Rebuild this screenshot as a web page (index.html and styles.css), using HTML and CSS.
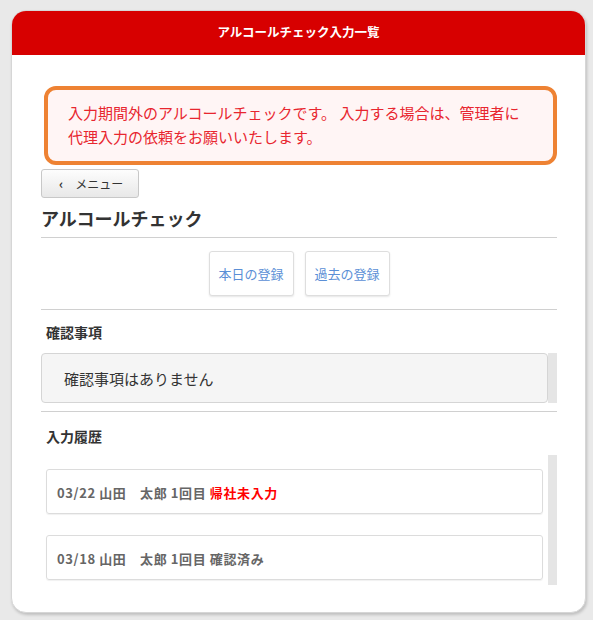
FILE: index.html
```html
<!DOCTYPE html>
<html lang="ja">

<head>
    <meta charset="utf-8">
    <meta name="viewport" content="width=device-width, initial-scale=1.0">
    <title>アルコールチェック入力一覧</title>
    <link rel="stylesheet" href="styles.css">
</head>

<body>
    <div class="kort">
        <header class="topbar">アルコールチェック入力一覧</header>

        <main class="indhold">
            <div class="advarsel">
                入力期間外のアルコールチェックです。 入力する場合は、管理者に<br>代理入力の依頼をお願いいたします。
            </div>

            <button class="menu-knap"><span class="pil">‹</span>メニュー</button>

            <h1>アルコールチェック</h1>

            <nav class="valg">
                <button class="valg-knap">本日の登録</button>
                <button class="valg-knap">過去の登録</button>
            </nav>

            <section class="bekraeft">
                <h2>確認事項</h2>
                <div class="med-spor">
                    <div class="tom-boks">確認事項はありません</div>
                    <div class="spor"></div>
                </div>
            </section>

            <section>
                <h2 class="historik-titel">入力履歴</h2>
                <div class="med-spor historik">
                    <ul class="liste">
                        <li class="post">03/22 山田　太郎 1回目 <span class="mangler">帰社未入力</span></li>
                        <li class="post">03/18 山田　太郎 1回目 確認済み</li>
                    </ul>
                    <div class="spor"></div>
                </div>
            </section>
        </main>
    </div>
</body>

</html>
```

FILE: styles.css
```css
* {
    margin: 0;
    padding: 0;
    box-sizing: border-box;
}

html {
    background-color: #e9e9e9;
}

body {
    padding: 10px 7px 7px 11px;
    font-family: "Noto Sans CJK JP", "Noto Sans", sans-serif;
    color: #333;
}

.kort {
    height: 603px;
    background-color: #fff;
    border: 1px solid #d6d6d6;
    border-radius: 15px;
    box-shadow: 1px 2px 3px rgba(0, 0, 0, 0.18);
    overflow: hidden;
}

.topbar {
    height: 45px;
    background-color: #d70000;
    color: #fff;
    font-size: 12.5px;
    font-weight: bold;
    text-align: center;
    line-height: 44px;
    margin: -1px -1px 0 -1px;
}

.indhold {
    padding: 31px 28px 0 29px;
}

.advarsel {
    margin-left: 3px;
    border: 4px solid #ee8233;
    border-radius: 12px;
    background-color: #fff5f5;
    color: #e8262f;
    font-size: 15px;
    line-height: 24px;
    padding: 11px 10px 12px 20px;
}

.menu-knap {
    margin-top: 4px;
    width: 98px;
    height: 29px;
    border: 1px solid #c8c8c8;
    border-radius: 3px;
    background: linear-gradient(#fdfdfd, #e8e8e8);
    font-family: inherit;
    font-size: 12px;
    color: #333;
    text-align: left;
    padding-left: 17px;
    cursor: pointer;
}

.pil {
    font-weight: bold;
    font-size: 13px;
    margin-right: 12px;
}

h1 {
    margin-top: 7px;
    font-size: 18px;
    line-height: 26px;
    font-weight: bold;
    color: #333;
    padding-bottom: 6px;
    border-bottom: 1px solid #d0d0d0;
}

.valg {
    display: flex;
    justify-content: center;
    gap: 11px;
    padding: 13px 0 13px 0;
    border-bottom: 1px solid #d0d0d0;
}

.valg-knap {
    width: 85px;
    height: 45px;
    background-color: #fff;
    border: 1px solid #dedede;
    border-radius: 3px;
    box-shadow: 0 1px 2px rgba(0, 0, 0, 0.1);
    font-family: inherit;
    font-size: 13px;
    color: #5b8fd6;
    cursor: pointer;
}

h2 {
    margin-top: 12px;
    margin-left: 5px;
    font-size: 14px;
    line-height: 20px;
    font-weight: bold;
    color: #333;
}

.bekraeft {
    padding-bottom: 8px;
    border-bottom: 1px solid #d0d0d0;
}

.med-spor {
    display: flex;
    margin-top: 11px;
}

.tom-boks {
    flex: 1;
    height: 50px;
    background-color: #f5f5f5;
    border: 1px solid #d5d5d5;
    border-radius: 4px;
    font-size: 15px;
    line-height: 50px;
    padding-left: 22px;
    color: #333;
}

.spor {
    width: 9px;
    background-color: #e5e5e5;
}

.historik-titel {
    margin-top: 14px;
}

.historik {
    margin-top: 9px;
    height: 130px;
}

.liste {
    flex: 1;
    list-style: none;
    padding: 14px 5px 0 5px;
    display: flex;
    flex-direction: column;
    gap: 21px;
}

.post {
    height: 45px;
    border: 1px solid #dcdcdc;
    border-radius: 3px;
    box-shadow: 0 1px 1px rgba(0, 0, 0, 0.06);
    padding: 13px 10px 0 10px;
    font-size: 13px;
    font-weight: bold;
    letter-spacing: 0.6px;
    color: #666;
}

.mangler {
    color: #f00;
}
```
